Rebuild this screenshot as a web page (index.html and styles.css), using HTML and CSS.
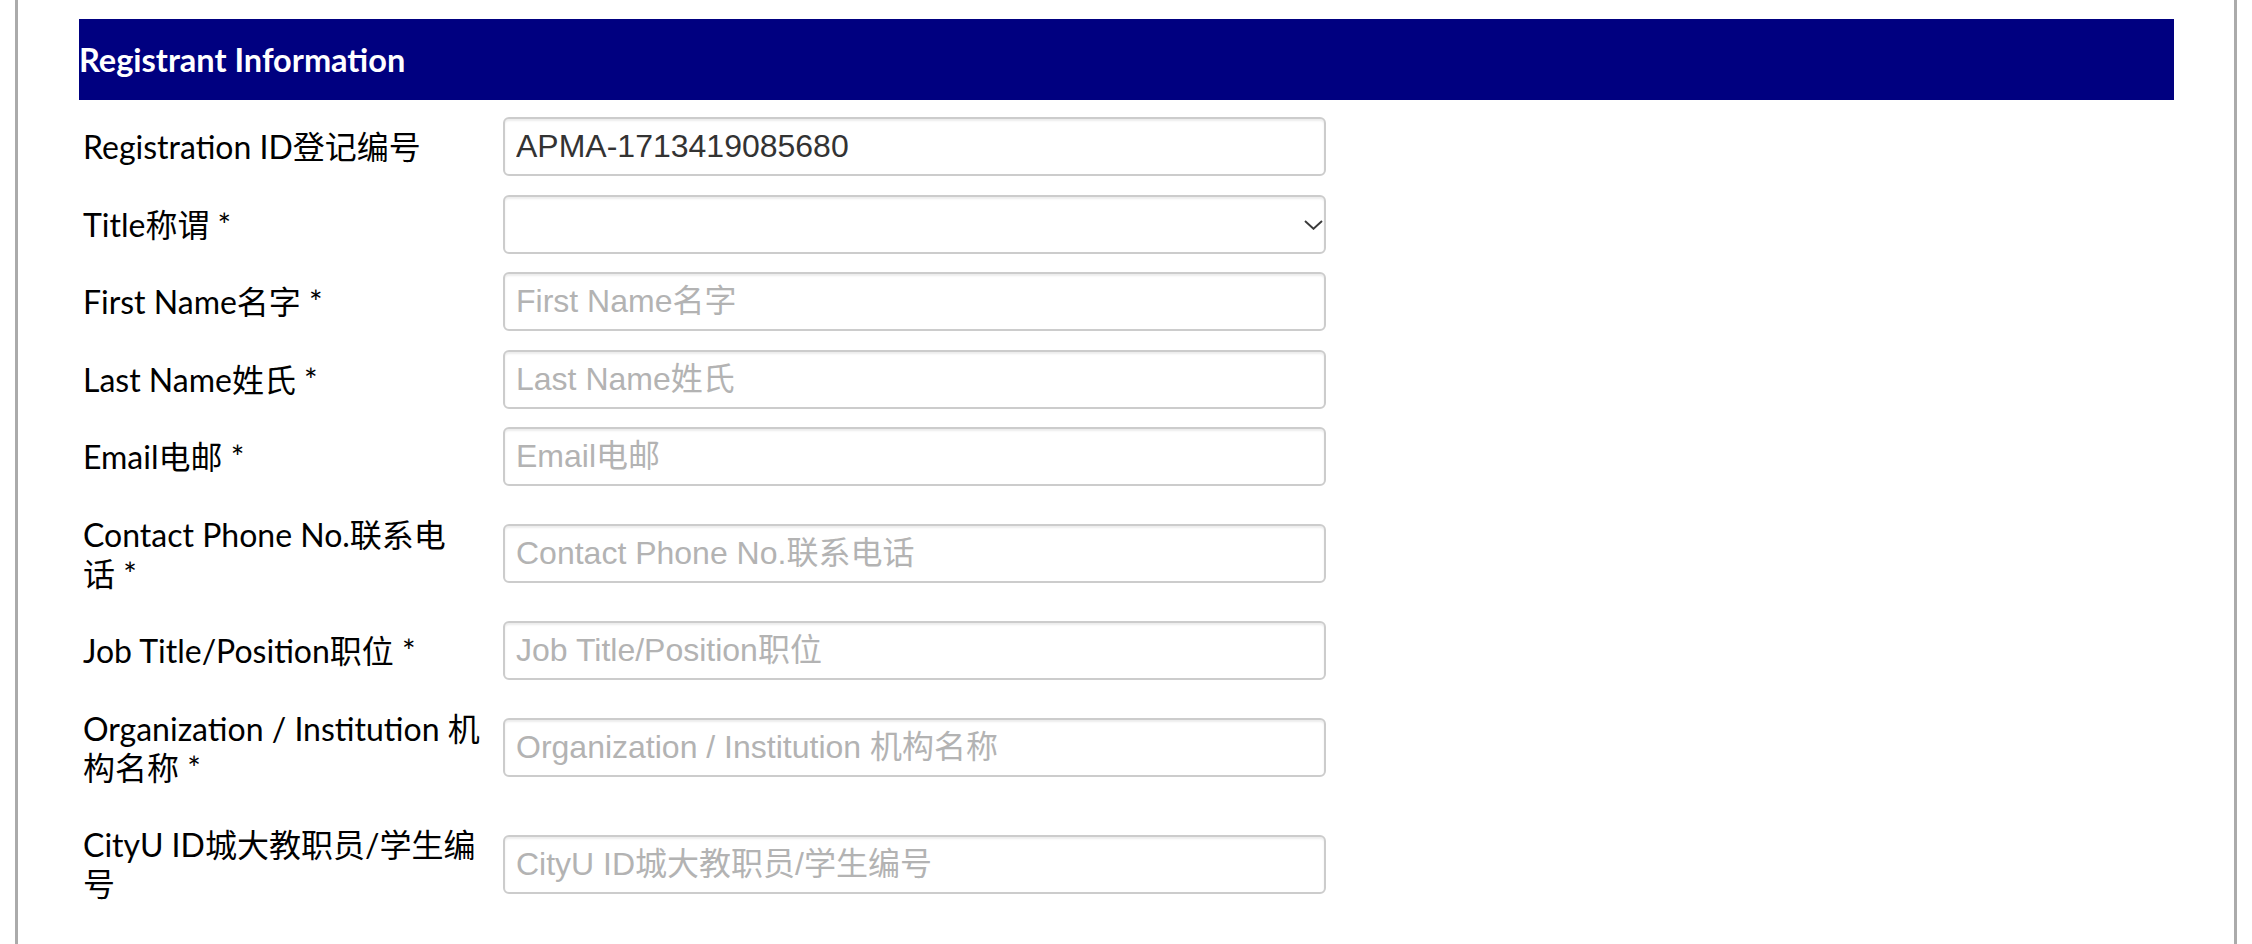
FILE: index.html
```html
<!DOCTYPE html>
<html lang="en">
<head>
<meta charset="utf-8">
<title>Registrant Information</title>
<link rel="stylesheet" href="styles.css">
</head>
<body>
<div class="page">
  <h2 class="section-title">Registrant Information</h2>
  <form class="form">
    <div class="form-row">
      <label class="form-label">Registration ID登记编号</label>
      <div class="form-field"><input class="form-input" type="text" value="APMA-1713419085680"></div>
    </div>
    <div class="form-row">
      <label class="form-label">Title称谓&nbsp;*</label>
      <div class="form-field select-wrap">
        <select class="form-input form-select"><option></option></select>
        <svg class="select-arrow" width="19" height="10" viewBox="0 0 19 10"><polyline points="1,1 9.5,8.8 18,1" fill="none" stroke="#3a3a3a" stroke-width="1.9"/></svg>
      </div>
    </div>
    <div class="form-row">
      <label class="form-label">First Name名字&nbsp;*</label>
      <div class="form-field"><input class="form-input" type="text" placeholder="First Name名字"></div>
    </div>
    <div class="form-row">
      <label class="form-label">Last Name姓氏&nbsp;*</label>
      <div class="form-field"><input class="form-input" type="text" placeholder="Last Name姓氏"></div>
    </div>
    <div class="form-row">
      <label class="form-label">Email电邮&nbsp;*</label>
      <div class="form-field"><input class="form-input" type="text" placeholder="Email电邮"></div>
    </div>
    <div class="form-row">
      <label class="form-label">Contact Phone No.联系电话&nbsp;*</label>
      <div class="form-field"><input class="form-input" type="text" placeholder="Contact Phone No.联系电话"></div>
    </div>
    <div class="form-row">
      <label class="form-label">Job Title/Position职位&nbsp;*</label>
      <div class="form-field"><input class="form-input" type="text" placeholder="Job Title/Position职位"></div>
    </div>
    <div class="form-row">
      <label class="form-label">Organization / Institution 机构名称&nbsp;*</label>
      <div class="form-field"><input class="form-input" type="text" placeholder="Organization / Institution 机构名称"></div>
    </div>
    <div class="form-row">
      <label class="form-label">CityU ID城大教职员/学生编号</label>
      <div class="form-field"><input class="form-input" type="text" placeholder="CityU ID城大教职员/学生编号"></div>
    </div>
  </form>
</div>
</body>
</html>
```

FILE: styles.css
```css
html, body {
  margin: 0;
  padding: 0;
  background: #ffffff;
}

body {
  font-family: Lato, "Noto Sans CJK SC", sans-serif;
  color: #000;
}

.page {
  box-sizing: border-box;
  margin: 0 15px;
  min-height: 944px;
  border-left: 3px solid #ababab;
  border-right: 3px solid #ababab;
  padding: 19px 60px 0 61px;
}

.section-title {
  margin: 0;
  background: #000080;
  color: #ffffff;
  font-family: Lato, "Noto Sans CJK SC", sans-serif;
  font-weight: 700;
  font-size: 32.5px;
  line-height: 40px;
  padding: 21px 0 20px;
}

.form {
  margin: 17px 0 0;
}

.form-row {
  display: flex;
  align-items: center;
  margin-bottom: 18.5px;
}

.form-label {
  flex: none;
  width: 400px;
  padding: 10px 20px 10px 4px;
  font-size: 32px;
  line-height: 39px;
  color: #000;
}

.form-field {
  flex: none;
  width: 823px;
}

.select-wrap {
  position: relative;
}

.form-input {
  display: block;
  width: 100%;
  height: 59px;
  box-sizing: border-box;
  margin: 0;
  border: 2px solid #cccccc;
  border-radius: 6px;
  padding: 0 11px;
  background: #ffffff;
  font-family: "Liberation Sans", Arial, "Noto Sans CJK SC", sans-serif;
  font-size: 32px;
  color: #333333;
  box-shadow: inset 0 2px 2px rgba(0, 0, 0, 0.075);
  outline: none;
}

.form-input::placeholder {
  color: #b3b3b3;
  opacity: 1;
}

.form-select {
  appearance: none;
  -webkit-appearance: none;
}

.select-arrow {
  position: absolute;
  right: 3px;
  top: 25px;
}
```
